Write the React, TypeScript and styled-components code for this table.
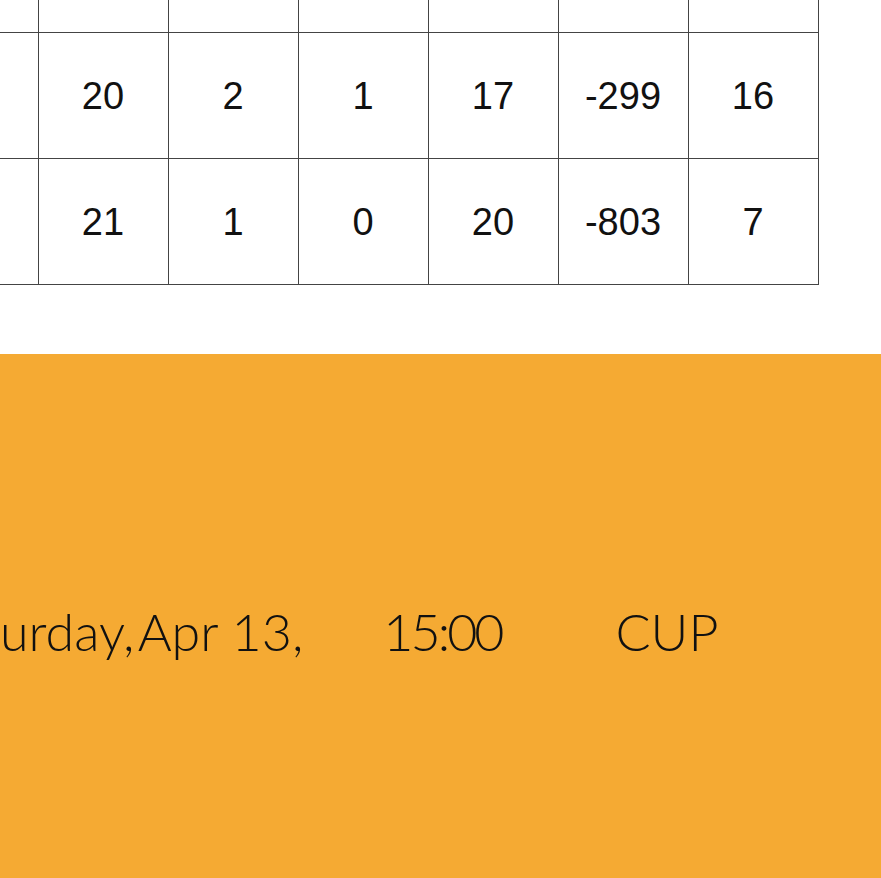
import styled, { createGlobalStyle } from 'styled-components';

const GlobalStyle = createGlobalStyle`
  * {
    box-sizing: border-box;
  }
  body {
    margin: 0;
    background: #ffffff;
    overflow: hidden;
  }
`;

const rows = [
  ['', '', '', '', '', '', ''],
  ['', '20', '2', '1', '17', '-299', '16'],
  ['', '21', '1', '0', '20', '-803', '7'],
];

function App() {
  return (
    <Page>
      <GlobalStyle />
      <TableWrapper>
        <StandingsTable>
          <tbody>
            {rows.map((row, i) => (
              <Row key={i} $first={i === 0}>
                {row.map((cell, j) => (
                  <Cell key={j} $lead={j === 0}>
                    {cell}
                  </Cell>
                ))}
              </Row>
            ))}
          </tbody>
        </StandingsTable>
      </TableWrapper>
      <MatchBanner>
        <MatchInfo>
          <InfoText $offset={0}>urday,&#8202;Apr 13,</InfoText>
          <InfoText $offset={80} $tight>15:00</InfoText>
          <InfoText $offset={114}>CUP</InfoText>
        </MatchInfo>
      </MatchBanner>
    </Page>
  );
}

export default App;

const Page = styled.div`
  width: 881px;
  height: 878px;
  display: flex;
  flex-direction: column;
  overflow: hidden;
`;

const TableWrapper = styled.div`
  height: 354px;
  padding-bottom: 70px;
`;

const StandingsTable = styled.table`
  border-collapse: collapse;
  table-layout: fixed;
  font-family: 'Liberation Sans', Arial, sans-serif;
  color: #111111;
`;

const Row = styled.tr<{ $first?: boolean }>`
  height: ${({ $first }) => ($first ? '32px' : '126px')};

  & > td {
    border-top: ${({ $first }) => ($first ? 'none' : '1px solid #444444')};
  }
`;

const Cell = styled.td<{ $lead?: boolean }>`
  width: ${({ $lead }) => ($lead ? '38px' : '130px')};
  padding: 0;
  border: 1px solid #444444;
  border-left: ${({ $lead }) => ($lead ? 'none' : '1px solid #444444')};
  text-align: center;
  vertical-align: middle;
  font-size: 38px;
  line-height: 1;
  padding-top: 2px;
`;

const MatchBanner = styled.div`
  flex: 1;
  background: #f5aa33;
  display: flex;
  align-items: flex-start;
  padding-top: 251px;
`;

const MatchInfo = styled.div`
  display: flex;
  align-items: baseline;
  font-family: Lato, 'Open Sans', sans-serif;
  font-weight: 300;
  font-size: 52px;
  line-height: 1;
  color: #111111;
`;

const InfoText = styled.span<{ $offset: number; $tight?: boolean }>`
  margin-left: ${({ $offset }) => $offset}px;
  letter-spacing: ${({ $tight }) => ($tight ? '-3px' : '0')};
  white-space: nowrap;
`;
